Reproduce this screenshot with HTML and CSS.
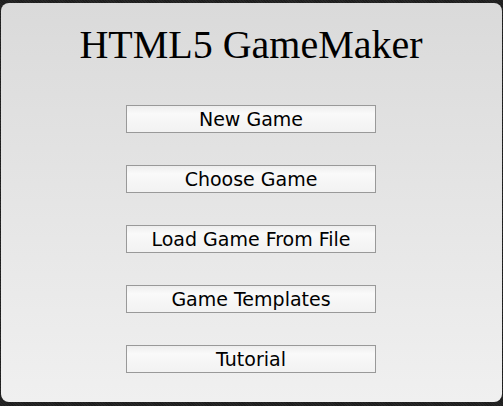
FILE: index.html
```html
<!DOCTYPE html>
<html>
<head>
<meta charset="utf-8">
<link rel="stylesheet" href="styles.css">
</head>
<body>
<div class="panel">
  <h1 class="title">HTML5 GameMaker</h1>
  <div class="menu">
    <button class="btn">New Game</button>
    <button class="btn">Choose Game</button>
    <button class="btn">Load Game From File</button>
    <button class="btn">Game Templates</button>
    <button class="btn">Tutorial</button>
  </div>
</div>
</body>
</html>
```
FILE: styles.css
```css
html, body {
  margin: 0;
  padding: 0;
  height: 406px;
  overflow: hidden;
}
body {
  background: repeating-linear-gradient(45deg, #262626 0, #262626 1px, #1e1e1e 1px, #1e1e1e 2px);
  padding: 3px 1px 4px 1px;
  box-sizing: border-box;
}
.panel {
  height: 399px;
  padding-right: 1px;
  box-sizing: border-box;
  border-radius: 8px;
  background: linear-gradient(#dadada, #f0f0f0);
  display: flex;
  flex-direction: column;
  align-items: center;
}
.title {
  margin: 19px 0 0 0;
  font-family: "Liberation Serif", serif;
  font-weight: normal;
  font-size: 40px;
  line-height: 46px;
  color: #000;
}
.menu {
  margin-top: 37px;
  display: flex;
  flex-direction: column;
  gap: 32px;
}
.btn {
  width: 250px;
  height: 28px;
  margin: 0;
  padding: 0;
  border: 1px solid #999;
  background: linear-gradient(#eeeeee 0%, #fafafa 30%, #f6f6f6 60%, #f2f2f2 100%);
  font-family: "DejaVu Sans", sans-serif;
  font-size: 19px;
  color: #000;
  line-height: 26px;
}
```
